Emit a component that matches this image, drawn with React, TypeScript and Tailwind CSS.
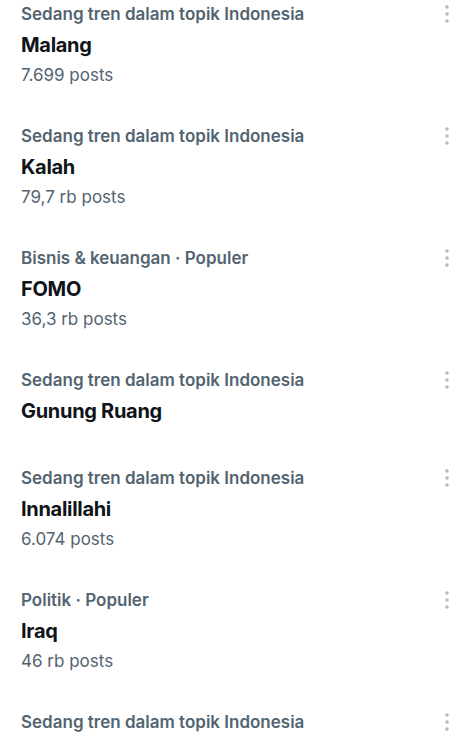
const trends = [
  { category: "Sedang tren dalam topik Indonesia", name: "Malang", posts: "7.699 posts" },
  { category: "Sedang tren dalam topik Indonesia", name: "Kalah", posts: "79,7 rb posts" },
  { category: "Bisnis & keuangan · Populer", name: "FOMO", posts: "36,3 rb posts" },
  { category: "Sedang tren dalam topik Indonesia", name: "Gunung Ruang", posts: null },
  { category: "Sedang tren dalam topik Indonesia", name: "Innalillahi", posts: "6.074 posts" },
  { category: "Politik · Populer", name: "Iraq", posts: "46 rb posts" },
  { category: "Sedang tren dalam topik Indonesia", name: "", posts: null },
];

function MoreDots() {
  return (
    <svg width="6" height="20" viewBox="0 0 6 20" className="text-[#b4bcc3]">
      <circle cx="3" cy="3" r="1.8" fill="currentColor" />
      <circle cx="3" cy="10" r="1.8" fill="currentColor" />
      <circle cx="3" cy="17" r="1.8" fill="currentColor" />
    </svg>
  );
}

export default function App() {
  return (
    <div
      className="h-[741px] w-[474px] overflow-hidden bg-white"
      style={{ fontFamily: "Inter, 'Noto Sans', sans-serif" }}
    >
      {trends.map((trend, i) => (
        <div
          key={i}
          className={`relative pl-[21px] pr-[40px] pt-[3px] ${trend.posts ? "pb-[36px]" : "pb-[40px]"}`}
        >
          <div className="h-[22px] text-[17px] font-semibold leading-[22px] text-[#536471]">
            {trend.category}
          </div>
          {trend.name ? (
            <div className="mt-[7px] h-[26px] text-[20px] font-bold leading-[26px] tracking-[-0.3px] text-[#0f1419]">
              {trend.name}
            </div>
          ) : null}
          {trend.posts ? (
            <div className="mt-[6px] h-[22px] text-[17px] leading-[22px] text-[#536471]">
              {trend.posts}
            </div>
          ) : null}
          <div className="absolute right-[24px] top-[4px]">
            <MoreDots />
          </div>
        </div>
      ))}
    </div>
  );
}
